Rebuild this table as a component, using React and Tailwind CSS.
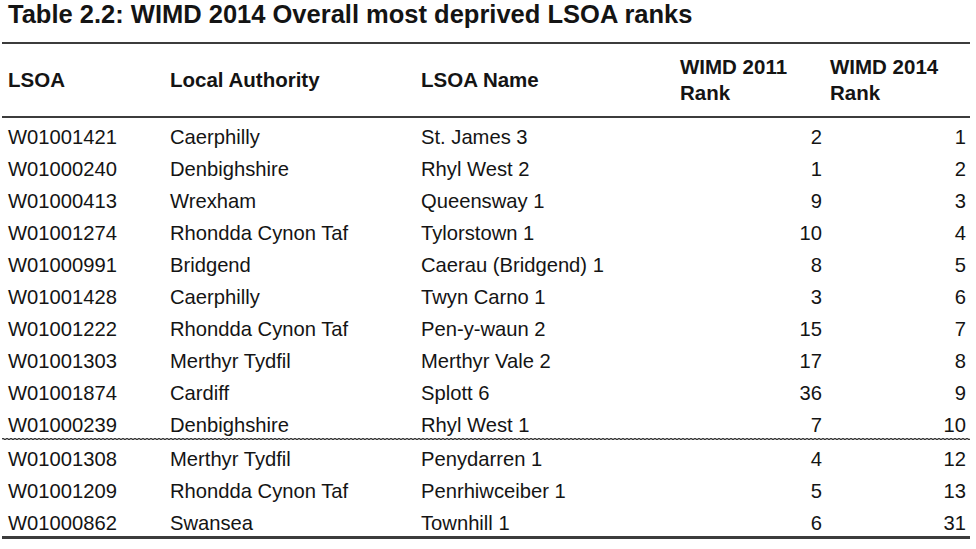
import React from "react";

const rows = [
  ["W01001421", "Caerphilly", "St. James 3", "2", "1"],
  ["W01000240", "Denbighshire", "Rhyl West 2", "1", "2"],
  ["W01000413", "Wrexham", "Queensway 1", "9", "3"],
  ["W01001274", "Rhondda Cynon Taf", "Tylorstown 1", "10", "4"],
  ["W01000991", "Bridgend", "Caerau (Bridgend) 1", "8", "5"],
  ["W01001428", "Caerphilly", "Twyn Carno 1", "3", "6"],
  ["W01001222", "Rhondda Cynon Taf", "Pen-y-waun 2", "15", "7"],
  ["W01001303", "Merthyr Tydfil", "Merthyr Vale 2", "17", "8"],
  ["W01001874", "Cardiff", "Splott 6", "36", "9"],
  ["W01000239", "Denbighshire", "Rhyl West 1", "7", "10"],
  ["W01001308", "Merthyr Tydfil", "Penydarren 1", "4", "12"],
  ["W01001209", "Rhondda Cynon Taf", "Penrhiwceiber 1", "5", "13"],
  ["W01000862", "Swansea", "Townhill 1", "6", "31"],
];

const grid = "grid grid-cols-[168px_251px_259px_150px_140px]";

function Wavy() {
  let d = "M0 1";
  for (let x = 0; x < 968; x += 4) {
    d += ` Q${x + 1} 0 ${x + 2} 1 T${x + 4} 1`;
  }
  return (
    <svg width="968" height="2" viewBox="0 0 968 2" className="block">
      <path d={d} fill="none" stroke="#333" strokeWidth="1.2" />
    </svg>
  );
}

export default function App() {
  return (
    <div className="w-[976px] h-[549px] bg-white text-[#141414] font-['Liberation_Sans',Arial,sans-serif] overflow-hidden">
      <div className="pl-2 text-[25.5px] font-bold leading-[28px] mb-[14px]">
        Table 2.2: WIMD 2014 Overall most deprived LSOA ranks
      </div>
      <div className="ml-[2px] w-[968px]">
        <div className={`${grid} h-[76px] items-center border-t-2 border-b-2 border-[#3c3c3c] text-[20.5px] font-bold leading-[26px]`}>
          <div className="pl-[6px]">LSOA</div>
          <div>Local Authority</div>
          <div>LSOA Name</div>
          <div>
            WIMD 2011
            <br />
            Rank
          </div>
          <div>
            WIMD 2014
            <br />
            Rank
          </div>
        </div>
        {rows.map((r, i) => (
          <React.Fragment key={i}>
            <div className={`${grid} h-[32px] pt-[7px] text-[20.2px] leading-[24px]`}>
              <div className="pl-[6px]">{r[0]}</div>
              <div>{r[1]}</div>
              <div>{r[2]}</div>
              <div className="text-right pr-[8px]">{r[3]}</div>
              <div className="text-right pr-[4px]">{r[4]}</div>
            </div>
            {i === 9 && <Wavy />}
          </React.Fragment>
        ))}
        <div className="h-[3px] bg-[#3c3c3c]" />
      </div>
    </div>
  );
}
